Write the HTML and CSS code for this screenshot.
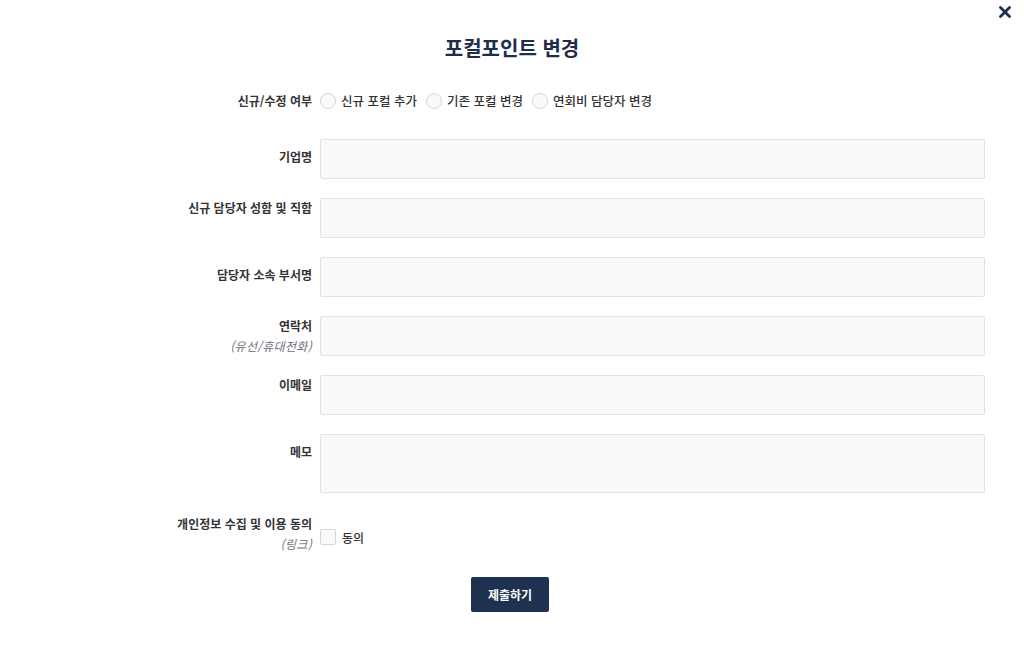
FILE: index.html
```html
<!DOCTYPE html>
<html lang="ko">
<head>
  <meta charset="UTF-8">
  <meta name="viewport" content="width=device-width, initial-scale=1.0">
  <title>포컬포인트 변경</title>
  <link rel="stylesheet" href="styles.css">
</head>
<body>

  <div class="modal">
    <!-- Close -->
    <button class="close-btn" type="button" aria-label="닫기">
      <svg width="12" height="12" viewBox="0 0 12 12">
        <path d="M1.5 1.5 L10.5 10.5 M10.5 1.5 L1.5 10.5" stroke="#1f2d4a" stroke-width="2.8" stroke-linecap="round"/>
      </svg>
    </button>

    <h2 class="modal-title">포컬포인트 변경</h2>

    <form class="form">
      <!-- Type -->
      <div class="row row-radio">
        <label class="row-label">신규/수정 여부</label>
        <div class="radio-group">
          <label class="radio"><input type="radio" name="type"><span class="mark"></span>신규 포컬 추가</label>
          <label class="radio"><input type="radio" name="type"><span class="mark"></span>기존 포컬 변경</label>
          <label class="radio"><input type="radio" name="type"><span class="mark"></span>연회비 담당자 변경</label>
        </div>
      </div>

      <div class="row">
        <label class="row-label mid">기업명</label>
        <input class="field" type="text">
      </div>

      <div class="row">
        <label class="row-label">신규 담당자 성함 및 직함</label>
        <input class="field" type="text">
      </div>

      <div class="row">
        <label class="row-label mid">담당자 소속 부서명</label>
        <input class="field" type="text">
      </div>

      <div class="row">
        <label class="row-label">연락처<span class="sub">(유선/휴대전화)</span></label>
        <input class="field" type="text">
      </div>

      <div class="row">
        <label class="row-label">이메일</label>
        <input class="field" type="text">
      </div>

      <div class="row">
        <label class="row-label mid">메모</label>
        <textarea class="field memo"></textarea>
      </div>

      <!-- Consent -->
      <div class="row row-consent">
        <label class="row-label">개인정보 수집 및 이용 동의<span class="sub">(링크)</span></label>
        <label class="check"><input type="checkbox"><span class="box"></span>동의</label>
      </div>

      <div class="actions">
        <button class="submit-btn" type="submit">제출하기</button>
      </div>
    </form>
  </div>

</body>
</html>
```

FILE: styles.css
```css
/* General Styles */
body {
  margin: 0;
  padding: 0;
  background: #fff;
  font-family: "Noto Sans CJK KR", "Noto Sans", sans-serif;
  color: #333;
}
.modal {
  position: relative;
  width: 1024px;
  height: 671px;
  padding-top: 36px;
  box-sizing: border-box;
}
.close-btn {
  position: absolute;
  top: 6px;
  right: 13px;
  width: 12px;
  height: 12px;
  padding: 0;
  border: none;
  background: none;
  cursor: pointer;
  line-height: 0;
}
.modal-title {
  margin: 0 0 31px;
  text-align: center;
  font-size: 20px;
  line-height: 24px;
  font-weight: 700;
  color: #1f2d4a;
}

/* Form */
.form {
  padding: 0 39px 0 160px;
}
.row {
  display: grid;
  grid-template-columns: 152px 1fr;
  column-gap: 8px;
  margin-bottom: 19px;
}
.row-label {
  text-align: right;
  font-size: 12px;
  line-height: 20px;
  font-weight: 700;
  color: #333;
}
.row-label.mid {
  padding-top: 8px;
}
.row-label .sub {
  display: block;
  font-weight: 400;
  font-style: italic;
  color: #6b7280;
  letter-spacing: 0.3px;
}
.field {
  height: 40px;
  box-sizing: border-box;
  margin: 0;
  border: 1px solid #e2e2e2;
  border-radius: 2px;
  background: #f9f9f9;
  font-family: inherit;
  font-size: 12px;
  padding: 0 10px;
  outline: none;
}
.field.memo {
  height: 59px;
  resize: none;
  padding: 8px 10px;
}

/* Radio */
.row-radio {
  margin-bottom: 28px;
  align-items: center;
}
.radio-group {
  display: flex;
  align-items: center;
  gap: 9px;
}
.radio {
  display: flex;
  align-items: center;
  gap: 5px;
  font-size: 12.5px;
  line-height: 20px;
  font-weight: 500;
  color: #333;
  cursor: pointer;
}
.radio input,
.check input {
  display: none;
}
.radio .mark {
  width: 16px;
  height: 16px;
  box-sizing: border-box;
  border: 1px solid #d6d6d6;
  border-radius: 50%;
  background: #fafafa;
}

/* Checkbox */
.row-consent {
  margin-top: 21px;
  margin-bottom: 23px;
}
.check {
  display: flex;
  align-items: center;
  gap: 6px;
  padding-top: 13px;
  height: 20px;
  font-size: 12px;
  font-weight: 500;
  color: #333;
  cursor: pointer;
}
.check .box {
  width: 16px;
  height: 16px;
  box-sizing: border-box;
  border: 1px solid #d6d6d6;
  border-radius: 2px;
  background: #fafafa;
}

/* Submit */
.actions {
  display: flex;
  justify-content: center;
  margin-left: -160px;
  margin-right: -39px;
  padding-right: 4px;
}
.submit-btn {
  width: 78px;
  height: 35px;
  border: none;
  border-radius: 2px;
  background: #1f3150;
  color: #fff;
  font-family: inherit;
  font-size: 12px;
  font-weight: 700;
  cursor: pointer;
}
```
